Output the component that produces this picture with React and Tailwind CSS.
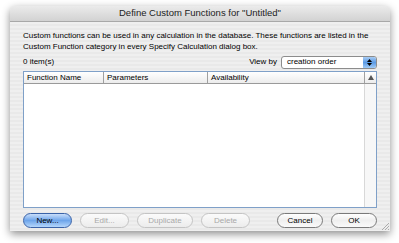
const font = { fontFamily: '"Liberation Sans", Arial, sans-serif' }

function AquaButton({ label, primary, disabled, className }) {
  return (
    <button
      className={`h-[15px] rounded-full border text-[8px] leading-none flex items-center justify-center ${className} ${
        primary
          ? 'border-[#3a63a8] bg-gradient-to-b from-[#c9defa] via-[#6ea5ea] to-[#b5d6fb] text-black'
          : disabled
            ? 'border-[#c4c4c4] bg-gradient-to-b from-[#fbfbfb] to-[#ececec] text-[#a8a8a8]'
            : 'border-[#7a7a7a] bg-gradient-to-b from-[#ffffff] via-[#efefef] to-[#fafafa] text-black'
      }`}
    >
      {label}
    </button>
  )
}

export default function App() {
  return (
    <div className="w-[399px] h-[243px] bg-white pl-[10px] pt-[6px] overflow-hidden" style={font}>
      <div className="relative w-[380px] h-[225px] rounded-t-[5px] bg-[#ededed] shadow-[0_3px_8px_rgba(0,0,0,0.45)] flex flex-col overflow-hidden">
        {/* Title bar */}
        <div className="h-[16px] shrink-0 bg-gradient-to-b from-[#ebebeb] to-[#d2d2d2] border-b border-[#a8a8a8] flex items-center justify-center text-[9.5px] text-[#222]">
          Define Custom Functions for "Untitled"
        </div>

        <div className="flex-1 flex flex-col px-[13px] pt-[8px] bg-[repeating-linear-gradient(180deg,#efefef_0px,#efefef_2px,#e9e9e9_2px,#e9e9e9_4px)]">
          <p className="text-[8px] leading-[11px] text-black">
            Custom functions can be used in any calculation in the database. These functions are listed in the
            <br />
            Custom Function category in every Specify Calculation dialog box.
          </p>

          <div className="flex items-center justify-between mt-[3px] h-[14px]">
            <span className="text-[8px] text-black">0 item(s)</span>
            <div className="flex items-center gap-[4px]">
              <span className="text-[8px] text-black">View by</span>
              <div className="w-[96px] h-[13px] rounded-[3px] border border-[#8c8c8c] bg-white flex items-center justify-between pl-[5px] overflow-hidden">
                <span className="text-[8px] text-black">creation order</span>
                <span className="w-[13px] h-full bg-gradient-to-b from-[#a8ccf3] via-[#5b9ae4] to-[#9fcaf6] flex flex-col items-center justify-center gap-[1px]">
                  <svg width="5" height="3" viewBox="0 0 5 3"><path d="M0 3 L2.5 0 L5 3Z" fill="#000" /></svg>
                  <svg width="5" height="3" viewBox="0 0 5 3"><path d="M0 0 L2.5 3 L5 0Z" fill="#000" /></svg>
                </span>
              </div>
            </div>
          </div>

          {/* List */}
          <div className="mt-[2px] h-[137px] border border-[#7fa0c8] bg-white flex flex-col">
            <div className="h-[12px] flex border-b border-[#9a9a9a] bg-gradient-to-b from-[#ffffff] to-[#ececec] text-[8px] text-black">
              <div className="w-[80px] border-r border-[#a0a0a0] pl-[3px] flex items-center">Function Name</div>
              <div className="w-[104px] border-r border-[#a0a0a0] pl-[3px] flex items-center">Parameters</div>
              <div className="flex-1 pl-[3px] flex items-center">Availability</div>
              <div className="w-[12px] border-l border-[#a0a0a0] flex items-center justify-center">
                <svg width="6" height="5" viewBox="0 0 6 5"><path d="M0 5 L3 0 L6 5Z" fill="#555" /></svg>
              </div>
            </div>
            <div className="flex-1 flex">
              <div className="flex-1" />
              <div className="w-[12px] border-l border-[#d8d8d8] bg-[#f7f7f7]" />
            </div>
          </div>

          <div className="flex items-center mt-[5px]">
            <AquaButton label="New..." primary className="w-[49px]" />
            <AquaButton label="Edit..." disabled className="w-[49px] ml-[8px]" />
            <AquaButton label="Duplicate" disabled className="w-[56px] ml-[8px]" />
            <AquaButton label="Delete" disabled className="w-[49px] ml-[8px]" />
            <AquaButton label="Cancel" className="w-[46px] ml-auto" />
            <AquaButton label="OK" className="w-[46px] ml-[8px]" />
          </div>
        </div>

        {/* resize grip */}
        <svg className="absolute right-[1px] bottom-[1px]" width="8" height="8" viewBox="0 0 8 8">
          <path d="M8 1 L1 8 M8 4 L4 8 M8 7 L7 8" stroke="#9a9a9a" strokeWidth="0.8" />
        </svg>
      </div>
    </div>
  )
}
